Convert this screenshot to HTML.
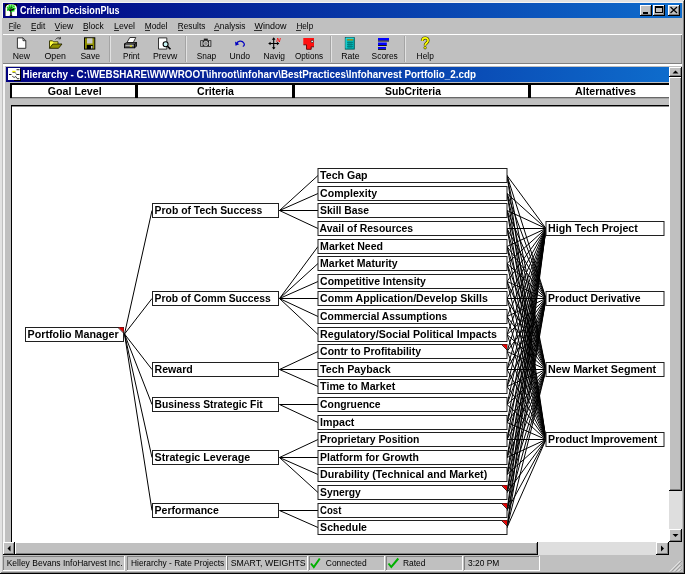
<!DOCTYPE html>
<html><head><meta charset="utf-8"><title>Criterium DecisionPlus</title>
<style>html,body{margin:0;padding:0;background:#c0c0c0;overflow:hidden}svg{display:block;will-change:transform}</style></head>
<body>
<svg width="685" height="574" viewBox="0 0 685 574" font-family="'Liberation Sans', sans-serif" shape-rendering="crispEdges">
<defs><linearGradient id="tg" x1="0" x2="1" y1="0" y2="0"><stop offset="0" stop-color="#000080"/><stop offset="1" stop-color="#0e6ccc"/></linearGradient></defs>
<rect x="0" y="0" width="685" height="574" fill="#c0c0c0"/>
<rect x="0" y="0" width="685" height="2" fill="#e2e2e2"/>
<rect x="0" y="0" width="2" height="574" fill="#e2e2e2"/>
<rect x="2" y="2" width="681" height="1" fill="#f4f4f4"/>
<rect x="2" y="2" width="1" height="16" fill="#f4f4f4"/>
<rect x="3" y="66" width="2" height="488" fill="#f4f4f4"/>
<rect x="684" y="0" width="1" height="574" fill="#000"/>
<rect x="0" y="573" width="685" height="1" fill="#000"/>
<rect x="683" y="1" width="1" height="572" fill="#808080"/>
<rect x="1" y="572" width="683" height="1" fill="#808080"/>
<rect x="3" y="3" width="679" height="15" fill="url(#tg)"/>
<rect x="5" y="4" width="12" height="12" fill="#000"/>
<g shape-rendering="auto"><path d="M5.500 16V8.500Q5.500 4.200 11 4.200Q17 4.200 17 8.500V16z" fill="#fff"/><path d="M11 15.300V10.500M11 11.500L8.300 8.800M11 11.500L13.800 8.300M11 11V6.800M8.800 9.300L7.500 8.800M13.300 8.800l.9 1.200M11 8.500l-1.500-1.500M11 8l1.300-1.500" stroke="#000" stroke-width="1.400" fill="none"/><path d="M9.800 15.400h2.400" stroke="#000" stroke-width="1"/><circle cx="7.8" cy="7.6" r="1.1" fill="#10e010"/><circle cx="9.4" cy="6.1" r="1.1" fill="#10e010"/><circle cx="11.6" cy="5.5" r="1.1" fill="#10e010"/><circle cx="13.8" cy="6.4" r="1.1" fill="#10e010"/><circle cx="14.7" cy="8.6" r="1.0" fill="#10e010"/><circle cx="12.4" cy="8.0" r="0.9" fill="#10e010"/><circle cx="9.6" cy="8.6" r="0.9" fill="#10e010"/><circle cx="7.9" cy="10.0" r="1.0" fill="#10e010"/><circle cx="13.7" cy="10.7" r="0.9" fill="#10e010"/><circle cx="11.6" cy="11.4" r="0.9" fill="#10e010"/><circle cx="10.6" cy="7.3" r="0.8" fill="#10e010"/></g>
<text x="20" y="14" font-size="10.5" font-weight="bold" fill="#fff" textLength="99.5" lengthAdjust="spacingAndGlyphs">Criterium DecisionPlus</text>
<rect x="640" y="5" width="12" height="11" fill="#000"/>
<rect x="640" y="5" width="11" height="10" fill="#fff"/>
<rect x="641" y="6" width="10" height="9" fill="#808080"/>
<rect x="641" y="6" width="9" height="8" fill="#c0c0c0"/>
<rect x="653" y="5" width="12" height="11" fill="#000"/>
<rect x="653" y="5" width="11" height="10" fill="#fff"/>
<rect x="654" y="6" width="10" height="9" fill="#808080"/>
<rect x="654" y="6" width="9" height="8" fill="#c0c0c0"/>
<rect x="668" y="5" width="12" height="11" fill="#000"/>
<rect x="668" y="5" width="11" height="10" fill="#fff"/>
<rect x="669" y="6" width="10" height="9" fill="#808080"/>
<rect x="669" y="6" width="9" height="8" fill="#c0c0c0"/>
<rect x="643" y="12" width="5" height="2" fill="#000"/>
<rect x="655" y="6" width="8" height="7" fill="#000"/>
<rect x="656" y="8" width="6" height="4" fill="#c0c0c0"/>
<path d="M670.500 7l6.500 6M677 7l-6.500 6" stroke="#000" stroke-width="1.200" shape-rendering="auto"/>
<rect x="681" y="35" width="1" height="28" fill="#808080"/>
<text x="8.7" y="28.5" font-size="9.4" textLength="12.3" lengthAdjust="spacingAndGlyphs">File</text>
<rect x="9" y="30" width="5" height="1" fill="#303030"/>
<text x="31" y="28.5" font-size="9.4" textLength="14.2" lengthAdjust="spacingAndGlyphs">Edit</text>
<rect x="31" y="30" width="5" height="1" fill="#303030"/>
<text x="54.6" y="28.5" font-size="9.4" textLength="18.6" lengthAdjust="spacingAndGlyphs">View</text>
<rect x="55" y="30" width="5" height="1" fill="#303030"/>
<text x="83" y="28.5" font-size="9.4" textLength="20.7" lengthAdjust="spacingAndGlyphs">Block</text>
<rect x="83" y="30" width="5" height="1" fill="#303030"/>
<text x="114" y="28.5" font-size="9.4" textLength="21" lengthAdjust="spacingAndGlyphs">Level</text>
<rect x="114" y="30" width="5" height="1" fill="#303030"/>
<text x="144.7" y="28.5" font-size="9.4" textLength="22.8" lengthAdjust="spacingAndGlyphs">Model</text>
<rect x="145" y="30" width="5" height="1" fill="#303030"/>
<text x="177.8" y="28.5" font-size="9.4" textLength="27.5" lengthAdjust="spacingAndGlyphs">Results</text>
<rect x="178" y="30" width="5" height="1" fill="#303030"/>
<text x="214.3" y="28.5" font-size="9.4" textLength="31.1" lengthAdjust="spacingAndGlyphs">Analysis</text>
<rect x="214" y="30" width="5" height="1" fill="#303030"/>
<text x="254.4" y="28.5" font-size="9.4" textLength="32.0" lengthAdjust="spacingAndGlyphs">Window</text>
<rect x="254" y="30" width="8" height="1" fill="#303030"/>
<text x="296.4" y="28.5" font-size="9.4" textLength="16.8" lengthAdjust="spacingAndGlyphs">Help</text>
<rect x="296" y="30" width="5" height="1" fill="#303030"/>
<rect x="3" y="34" width="679" height="1" fill="#fff"/>
<rect x="3" y="63" width="679" height="1" fill="#808080"/>
<rect x="3" y="64" width="679" height="2" fill="#fff"/>
<rect x="109" y="36" width="1" height="26" fill="#a4a4a4"/>
<rect x="110" y="36" width="1" height="26" fill="#e2e2e2"/>
<rect x="185" y="36" width="1" height="26" fill="#a4a4a4"/>
<rect x="186" y="36" width="1" height="26" fill="#e2e2e2"/>
<rect x="330" y="36" width="1" height="26" fill="#a4a4a4"/>
<rect x="331" y="36" width="1" height="26" fill="#e2e2e2"/>
<rect x="404" y="36" width="1" height="26" fill="#a4a4a4"/>
<rect x="405" y="36" width="1" height="26" fill="#e2e2e2"/>
<text x="12.8" y="58.7" font-size="9.2" textLength="17.3" lengthAdjust="spacingAndGlyphs">New</text>
<text x="44.5" y="58.7" font-size="9.2" textLength="21.5" lengthAdjust="spacingAndGlyphs">Open</text>
<text x="80.4" y="58.7" font-size="9.2" textLength="19.6" lengthAdjust="spacingAndGlyphs">Save</text>
<text x="123" y="58.7" font-size="9.2" textLength="16.6" lengthAdjust="spacingAndGlyphs">Print</text>
<text x="153" y="58.7" font-size="9.2" textLength="24.2" lengthAdjust="spacingAndGlyphs">Prevw</text>
<text x="196.8" y="58.7" font-size="9.2" textLength="19.4" lengthAdjust="spacingAndGlyphs">Snap</text>
<text x="229.5" y="58.7" font-size="9.2" textLength="20.5" lengthAdjust="spacingAndGlyphs">Undo</text>
<text x="263.5" y="58.7" font-size="9.2" textLength="21.5" lengthAdjust="spacingAndGlyphs">Navig</text>
<text x="295" y="58.7" font-size="9.2" textLength="28" lengthAdjust="spacingAndGlyphs">Options</text>
<text x="341.2" y="58.7" font-size="9.2" textLength="18.3" lengthAdjust="spacingAndGlyphs">Rate</text>
<text x="371.6" y="58.7" font-size="9.2" textLength="26.2" lengthAdjust="spacingAndGlyphs">Scores</text>
<text x="416.6" y="58.7" font-size="9.2" textLength="17.2" lengthAdjust="spacingAndGlyphs">Help</text>
<g shape-rendering="auto">
<path d="M17.400 37.900h5.600l2.800 2.800v7.600h-8.400z" fill="#fff" stroke="#202020" stroke-width=".9"/><path d="M23 37.900v2.800h2.800" fill="none" stroke="#202020" stroke-width=".9"/>
<path d="M49.500 48.300v-7.500h3l1 1h4.500v2.500" fill="#ffff40" stroke="#303000" stroke-width=".9"/><path d="M49.500 48.300l3.300-4.300h9.200l-3.500 4.300z" fill="#909000" stroke="#202000" stroke-width=".9"/><path d="M55.500 39.500c1.500-2 3.500-2.200 5-.8m0 0l-.2-1.800m.2 1.800l-1.800.3" fill="none" stroke="#303030" stroke-width=".9"/>
<rect x="84.500" y="37.800" width="10.300" height="11.300" fill="#909000" stroke="#000" stroke-width="1"/><rect x="87" y="38.300" width="5.500" height="5.200" fill="#c8c8c8"/><rect x="86.800" y="45" width="6" height="4" fill="#000"/><rect x="91" y="46" width="1.500" height="2.500" fill="#c0c0c0"/>
<path d="M127 42.500l2.800-5h6l-2.500 5z" fill="#fff" stroke="#202020" stroke-width=".9"/><path d="M124.500 44l2-1.500h10l-2 1.500z" fill="#e0e0e0" stroke="#000" stroke-width=".8"/><rect x="124.500" y="44" width="10" height="3.800" fill="#606060" stroke="#000" stroke-width=".9"/><path d="M134.500 44l2-1.500v3.800l-2 1.500z" fill="#404040" stroke="#000" stroke-width=".8"/><rect x="125.500" y="44.800" width="8" height=".9" fill="#d0d0d0"/><rect x="129.800" y="45.500" width="2.200" height="1.200" fill="#e0e000"/>
<path d="M158.500 37.900h8.300v11.200h-8.300z" fill="#fff" stroke="#202020" stroke-width=".9"/><circle cx="165.600" cy="44.200" r="2.500" fill="#c8f4f4" stroke="#000" stroke-width="1.100"/><path d="M167.500 46.200l3 3" stroke="#000" stroke-width="1.600"/>
<rect x="200.300" y="40.300" width="11" height="6.400" fill="#181818"/><rect x="203.800" y="38.600" width="4" height="1.800" fill="#181818"/><circle cx="205.800" cy="43.500" r="2.200" fill="#909090" stroke="#d8d8d8" stroke-width=".8"/><rect x="201.300" y="41" width="1.200" height="5" fill="#f0f0f0"/><rect x="209.200" y="41" width="1.200" height="5" fill="#f0f0f0"/>
<path d="M236.500 44c1-3.300 5.500-3.800 7.300-1 1 1.500 .5 3-1 3.500" fill="none" stroke="#0000c0" stroke-width="1.300"/><path d="M235 41.500l.500 4.300 3.800-1.500z" fill="#0000c0"/>
<path d="M273.700 38v11M269 43.500h9.500" stroke="#000" stroke-width="1.100" fill="none"/><path d="M273.700 37.300l-1.800 2.400h3.600zM273.700 49.600l-1.800-2.400h3.600zM268.200 43.500l2.400-1.800v3.600zM279.300 43.500l-2.400-1.800v3.600z" fill="#000"/>
<text x="276.2" y="41.8" font-size="6" font-weight="bold" fill="#ff0000" font-style="italic">N</text>
<path d="M303.300 38h10.700v8.800h-2.800v2.500h-4.700v-4.500h-3.200z" fill="#ff1010"/><path d="M303.500 44.800h3v4.500h4.700v-2.500h2.800" fill="none" stroke="#600000" stroke-width=".9"/><circle cx="312.200" cy="41.400" r="1.200" fill="#fff" stroke="#202020" stroke-width=".8"/>
<rect x="345.300" y="37.600" width="9" height="11.500" fill="#00b4b4" stroke="#005858" stroke-width=".9"/><path d="M346 48.500v-10.300h7.800" fill="none" stroke="#40f0f0" stroke-width=".8"/><rect x="347" y="39" width="6" height="1.600" fill="#909020"/><path d="M347 42.500h6M347 44.500h6M347 46.500h6M349 41.500v6.500M351 41.500v6.500" stroke="#007878" stroke-width=".8"/>
<rect x="378" y="38" width="11" height="2.600" fill="#0000ff"/><rect x="378" y="40.600" width="11" height=".9" fill="#000"/>
<rect x="378" y="42.500" width="8.800" height="2.500" fill="#0000ff"/><rect x="378" y="45" width="8.800" height=".9" fill="#000"/>
<rect x="378" y="47" width="8" height="1.900" fill="#0000ff"/><rect x="378" y="48.900" width="8" height=".9" fill="#000"/>
<path d="M422.300 41c0-4 5.800-4 5.800-.5 0 2.500-3 2.500-3 5" fill="none" stroke="#404000" stroke-width="3"/><path d="M422.300 41c0-4 5.800-4 5.800-.5 0 2.500-3 2.500-3 5" fill="none" stroke="#ffff00" stroke-width="1.700"/><circle cx="425.100" cy="47.700" r="1.300" fill="#ffff00" stroke="#404000" stroke-width=".7"/>
</g>
<rect x="6" y="67" width="663" height="15" fill="url(#tg)"/>
<rect x="8" y="68" width="12" height="12" fill="#fff"/>
<rect x="20" y="69" width="1" height="12" fill="#000"/>
<rect x="14" y="80" width="7" height="1" fill="#000"/>
<g shape-rendering="auto"><rect x="9" y="74" width="2.500" height="1" fill="#202020"/><rect x="12.300" y="70.800" width="3.200" height="1.400" fill="#f0f000"/><rect x="12.500" y="72.200" width="3" height=".7" fill="#404040"/><rect x="16.500" y="69.200" width="3" height="1" fill="#303030"/><rect x="16.500" y="74" width="3" height="1" fill="#303030"/><rect x="16.800" y="78.200" width="2.500" height="1" fill="#303030"/><path d="M12.200 76.200l2 1.300 2-1.300M15.500 73.300l1.200 1M16 77l1 1.200" stroke="#303030" stroke-width=".9" fill="none"/></g>
<text x="22.5" y="78" font-size="10.5" font-weight="bold" fill="#fff" textLength="453.5" lengthAdjust="spacingAndGlyphs">Hierarchy - C:\WEBSHARE\WWWROOT\ihroot\infoharv\BestPractices\Infoharvest Portfolio_2.cdp</text>
<rect x="10" y="83" width="659" height="16" fill="#fff"/>
<rect x="10" y="83" width="659" height="2" fill="#000"/>
<rect x="10" y="97" width="659" height="1" fill="#686868"/>
<rect x="10" y="98" width="659" height="1" fill="#a4a4a4"/>
<rect x="10" y="83" width="2" height="15" fill="#000"/>
<rect x="135" y="83" width="3" height="15" fill="#000"/>
<rect x="292" y="83" width="3" height="15" fill="#000"/>
<rect x="528" y="83" width="3" height="15" fill="#000"/>
<text x="47.8" y="95.2" font-size="11" font-weight="bold" textLength="53.8" lengthAdjust="spacingAndGlyphs">Goal Level</text>
<text x="197" y="95.2" font-size="11" font-weight="bold" textLength="37" lengthAdjust="spacingAndGlyphs">Criteria</text>
<text x="385" y="95.2" font-size="11" font-weight="bold" textLength="56" lengthAdjust="spacingAndGlyphs">SubCriteria</text>
<text x="575" y="95.2" font-size="11" font-weight="bold" textLength="61" lengthAdjust="spacingAndGlyphs">Alternatives</text>
<rect x="11" y="105" width="658" height="437" fill="#000"/>
<rect x="12" y="106" width="657" height="436" fill="#fff"/>
<rect x="12" y="106" width="657" height="1" fill="#8c8c8c"/>
<g shape-rendering="auto" stroke="#000" stroke-width="1" fill="none">
<path d="M124.5 334.0L152 210.5"/>
<path d="M279.5 210.5L318 175.5"/>
<path d="M279.5 210.5L318 193.5"/>
<path d="M279.5 210.5L318 210.5"/>
<path d="M279.5 210.5L318 228.5"/>
<path d="M124.5 334.0L152 298.5"/>
<path d="M279.5 298.5L318 246.5"/>
<path d="M279.5 298.5L318 263.5"/>
<path d="M279.5 298.5L318 281.5"/>
<path d="M279.5 298.5L318 298.5"/>
<path d="M279.5 298.5L318 316.5"/>
<path d="M279.5 298.5L318 334.5"/>
<path d="M124.5 334.0L152 369.5"/>
<path d="M279.5 369.5L318 351.5"/>
<path d="M279.5 369.5L318 369.5"/>
<path d="M279.5 369.5L318 386.5"/>
<path d="M124.5 334.0L152 404.5"/>
<path d="M279.5 404.5L318 404.5"/>
<path d="M279.5 404.5L318 422.5"/>
<path d="M124.5 334.0L152 457.5"/>
<path d="M279.5 457.5L318 439.5"/>
<path d="M279.5 457.5L318 457.5"/>
<path d="M279.5 457.5L318 474.5"/>
<path d="M279.5 457.5L318 492.5"/>
<path d="M124.5 334.0L152 510.5"/>
<path d="M279.5 510.5L318 510.5"/>
<path d="M279.5 510.5L318 527.5"/>
<path d="M507 175.5L546 228.5"/>
<path d="M507 175.5L546 298.5"/>
<path d="M507 175.5L546 369.5"/>
<path d="M507 175.5L546 439.5"/>
<path d="M507 193.5L546 228.5"/>
<path d="M507 193.5L546 298.5"/>
<path d="M507 193.5L546 369.5"/>
<path d="M507 193.5L546 439.5"/>
<path d="M507 210.5L546 228.5"/>
<path d="M507 210.5L546 298.5"/>
<path d="M507 210.5L546 369.5"/>
<path d="M507 210.5L546 439.5"/>
<path d="M507 228.5L546 228.5"/>
<path d="M507 228.5L546 298.5"/>
<path d="M507 228.5L546 369.5"/>
<path d="M507 228.5L546 439.5"/>
<path d="M507 246.5L546 228.5"/>
<path d="M507 246.5L546 298.5"/>
<path d="M507 246.5L546 369.5"/>
<path d="M507 246.5L546 439.5"/>
<path d="M507 263.5L546 228.5"/>
<path d="M507 263.5L546 298.5"/>
<path d="M507 263.5L546 369.5"/>
<path d="M507 263.5L546 439.5"/>
<path d="M507 281.5L546 228.5"/>
<path d="M507 281.5L546 298.5"/>
<path d="M507 281.5L546 369.5"/>
<path d="M507 281.5L546 439.5"/>
<path d="M507 298.5L546 228.5"/>
<path d="M507 298.5L546 298.5"/>
<path d="M507 298.5L546 369.5"/>
<path d="M507 298.5L546 439.5"/>
<path d="M507 316.5L546 228.5"/>
<path d="M507 316.5L546 298.5"/>
<path d="M507 316.5L546 369.5"/>
<path d="M507 316.5L546 439.5"/>
<path d="M507 334.5L546 228.5"/>
<path d="M507 334.5L546 298.5"/>
<path d="M507 334.5L546 369.5"/>
<path d="M507 334.5L546 439.5"/>
<path d="M507 351.5L546 228.5"/>
<path d="M507 351.5L546 298.5"/>
<path d="M507 351.5L546 369.5"/>
<path d="M507 351.5L546 439.5"/>
<path d="M507 369.5L546 228.5"/>
<path d="M507 369.5L546 298.5"/>
<path d="M507 369.5L546 369.5"/>
<path d="M507 369.5L546 439.5"/>
<path d="M507 386.5L546 228.5"/>
<path d="M507 386.5L546 298.5"/>
<path d="M507 386.5L546 369.5"/>
<path d="M507 386.5L546 439.5"/>
<path d="M507 404.5L546 228.5"/>
<path d="M507 404.5L546 298.5"/>
<path d="M507 404.5L546 369.5"/>
<path d="M507 404.5L546 439.5"/>
<path d="M507 422.5L546 228.5"/>
<path d="M507 422.5L546 298.5"/>
<path d="M507 422.5L546 369.5"/>
<path d="M507 422.5L546 439.5"/>
<path d="M507 439.5L546 228.5"/>
<path d="M507 439.5L546 298.5"/>
<path d="M507 439.5L546 369.5"/>
<path d="M507 439.5L546 439.5"/>
<path d="M507 457.5L546 228.5"/>
<path d="M507 457.5L546 298.5"/>
<path d="M507 457.5L546 369.5"/>
<path d="M507 457.5L546 439.5"/>
<path d="M507 474.5L546 228.5"/>
<path d="M507 474.5L546 298.5"/>
<path d="M507 474.5L546 369.5"/>
<path d="M507 474.5L546 439.5"/>
<path d="M507 492.5L546 228.5"/>
<path d="M507 492.5L546 298.5"/>
<path d="M507 492.5L546 369.5"/>
<path d="M507 492.5L546 439.5"/>
<path d="M507 510.5L546 228.5"/>
<path d="M507 510.5L546 298.5"/>
<path d="M507 510.5L546 369.5"/>
<path d="M507 510.5L546 439.5"/>
<path d="M507 527.5L546 228.5"/>
<path d="M507 527.5L546 298.5"/>
<path d="M507 527.5L546 369.5"/>
<path d="M507 527.5L546 439.5"/>
</g>
<rect x="25.5" y="327.5" width="98" height="14" fill="#fff" stroke="#202020" stroke-width="1" shape-rendering="auto"/>
<path d="M118.5 327.5h5v5z" fill="#e80000" shape-rendering="auto"/><path d="M118 327.5l5.500 5.500" stroke="#301010" stroke-width=".9" shape-rendering="auto"/>
<text x="27.6" y="338.4" font-size="11.2" font-weight="bold" textLength="91.1" lengthAdjust="spacingAndGlyphs">Portfolio Manager</text>
<rect x="152.5" y="203.5" width="126" height="14" fill="#fff" stroke="#202020" stroke-width="1" shape-rendering="auto"/>
<text x="154.6" y="214.4" font-size="11.2" font-weight="bold" textLength="107.7" lengthAdjust="spacingAndGlyphs">Prob of Tech Success</text>
<rect x="152.5" y="291.5" width="126" height="14" fill="#fff" stroke="#202020" stroke-width="1" shape-rendering="auto"/>
<text x="154.6" y="302.4" font-size="11.2" font-weight="bold" textLength="116.1" lengthAdjust="spacingAndGlyphs">Prob of Comm Success</text>
<rect x="152.5" y="362.5" width="126" height="14" fill="#fff" stroke="#202020" stroke-width="1" shape-rendering="auto"/>
<text x="154.6" y="373.4" font-size="11.2" font-weight="bold" textLength="38.2" lengthAdjust="spacingAndGlyphs">Reward</text>
<rect x="152.5" y="397.5" width="126" height="14" fill="#fff" stroke="#202020" stroke-width="1" shape-rendering="auto"/>
<text x="154.6" y="408.4" font-size="11.2" font-weight="bold" textLength="108.1" lengthAdjust="spacingAndGlyphs">Business Strategic Fit</text>
<rect x="152.5" y="450.5" width="126" height="14" fill="#fff" stroke="#202020" stroke-width="1" shape-rendering="auto"/>
<text x="154.6" y="461.4" font-size="11.2" font-weight="bold" textLength="95.6" lengthAdjust="spacingAndGlyphs">Strategic Leverage</text>
<rect x="152.5" y="503.5" width="126" height="14" fill="#fff" stroke="#202020" stroke-width="1" shape-rendering="auto"/>
<text x="154.6" y="514.4" font-size="11.2" font-weight="bold" textLength="64.2" lengthAdjust="spacingAndGlyphs">Performance</text>
<rect x="318.0" y="168.5" width="189.0" height="14" fill="#fff" stroke="#202020" stroke-width="1" shape-rendering="auto"/>
<text x="320.1" y="179.4" font-size="11.2" font-weight="bold" textLength="47.5" lengthAdjust="spacingAndGlyphs">Tech Gap</text>
<rect x="318.0" y="186.5" width="189.0" height="14" fill="#fff" stroke="#202020" stroke-width="1" shape-rendering="auto"/>
<text x="320.1" y="197.4" font-size="11.2" font-weight="bold" textLength="57" lengthAdjust="spacingAndGlyphs">Complexity</text>
<rect x="318.0" y="203.5" width="189.0" height="14" fill="#fff" stroke="#202020" stroke-width="1" shape-rendering="auto"/>
<text x="320.1" y="214.4" font-size="11.2" font-weight="bold" textLength="49" lengthAdjust="spacingAndGlyphs">Skill Base</text>
<rect x="318.0" y="221.5" width="189.0" height="14" fill="#fff" stroke="#202020" stroke-width="1" shape-rendering="auto"/>
<text x="319.6" y="232.4" font-size="11.2" font-weight="bold" textLength="93.5" lengthAdjust="spacingAndGlyphs">Avail of Resources</text>
<rect x="318.0" y="239.5" width="189.0" height="14" fill="#fff" stroke="#202020" stroke-width="1" shape-rendering="auto"/>
<text x="320.1" y="250.4" font-size="11.2" font-weight="bold" textLength="63" lengthAdjust="spacingAndGlyphs">Market Need</text>
<rect x="318.0" y="256.5" width="189.0" height="14" fill="#fff" stroke="#202020" stroke-width="1" shape-rendering="auto"/>
<text x="320.1" y="267.4" font-size="11.2" font-weight="bold" textLength="77.6" lengthAdjust="spacingAndGlyphs">Market Maturity</text>
<rect x="318.0" y="274.5" width="189.0" height="14" fill="#fff" stroke="#202020" stroke-width="1" shape-rendering="auto"/>
<text x="320.1" y="285.4" font-size="11.2" font-weight="bold" textLength="105.8" lengthAdjust="spacingAndGlyphs">Competitive Intensity</text>
<rect x="318.0" y="291.5" width="189.0" height="14" fill="#fff" stroke="#202020" stroke-width="1" shape-rendering="auto"/>
<text x="320.1" y="302.4" font-size="11.2" font-weight="bold" textLength="167.7" lengthAdjust="spacingAndGlyphs">Comm Application/Develop Skills</text>
<rect x="318.0" y="309.5" width="189.0" height="14" fill="#fff" stroke="#202020" stroke-width="1" shape-rendering="auto"/>
<text x="320.1" y="320.4" font-size="11.2" font-weight="bold" textLength="127.2" lengthAdjust="spacingAndGlyphs">Commercial Assumptions</text>
<rect x="318.0" y="327.5" width="189.0" height="14" fill="#fff" stroke="#202020" stroke-width="1" shape-rendering="auto"/>
<text x="320.1" y="338.4" font-size="11.2" font-weight="bold" textLength="176.9" lengthAdjust="spacingAndGlyphs">Regulatory/Social Political Impacts</text>
<rect x="318.0" y="344.5" width="189.0" height="14" fill="#fff" stroke="#202020" stroke-width="1" shape-rendering="auto"/>
<path d="M502.0 344.5h5v5z" fill="#e80000" shape-rendering="auto"/><path d="M501.5 344.5l5.500 5.500" stroke="#301010" stroke-width=".9" shape-rendering="auto"/>
<text x="320.1" y="355.4" font-size="11.2" font-weight="bold" textLength="100.9" lengthAdjust="spacingAndGlyphs">Contr to Profitability</text>
<rect x="318.0" y="362.5" width="189.0" height="14" fill="#fff" stroke="#202020" stroke-width="1" shape-rendering="auto"/>
<text x="320.1" y="373.4" font-size="11.2" font-weight="bold" textLength="70.5" lengthAdjust="spacingAndGlyphs">Tech Payback</text>
<rect x="318.0" y="379.5" width="189.0" height="14" fill="#fff" stroke="#202020" stroke-width="1" shape-rendering="auto"/>
<text x="320.1" y="390.4" font-size="11.2" font-weight="bold" textLength="75.1" lengthAdjust="spacingAndGlyphs">Time to Market</text>
<rect x="318.0" y="397.5" width="189.0" height="14" fill="#fff" stroke="#202020" stroke-width="1" shape-rendering="auto"/>
<text x="320.1" y="408.4" font-size="11.2" font-weight="bold" textLength="60.4" lengthAdjust="spacingAndGlyphs">Congruence</text>
<rect x="318.0" y="415.5" width="189.0" height="14" fill="#fff" stroke="#202020" stroke-width="1" shape-rendering="auto"/>
<text x="320.1" y="426.4" font-size="11.2" font-weight="bold" textLength="34.3" lengthAdjust="spacingAndGlyphs">Impact</text>
<rect x="318.0" y="432.5" width="189.0" height="14" fill="#fff" stroke="#202020" stroke-width="1" shape-rendering="auto"/>
<text x="320.1" y="443.4" font-size="11.2" font-weight="bold" textLength="99.3" lengthAdjust="spacingAndGlyphs">Proprietary Position</text>
<rect x="318.0" y="450.5" width="189.0" height="14" fill="#fff" stroke="#202020" stroke-width="1" shape-rendering="auto"/>
<text x="320.1" y="461.4" font-size="11.2" font-weight="bold" textLength="98.7" lengthAdjust="spacingAndGlyphs">Platform for Growth</text>
<rect x="318.0" y="467.5" width="189.0" height="14" fill="#fff" stroke="#202020" stroke-width="1" shape-rendering="auto"/>
<text x="320.1" y="478.4" font-size="11.2" font-weight="bold" textLength="167.1" lengthAdjust="spacingAndGlyphs">Durability (Technical and Market)</text>
<rect x="318.0" y="485.5" width="189.0" height="14" fill="#fff" stroke="#202020" stroke-width="1" shape-rendering="auto"/>
<path d="M502.0 485.5h5v5z" fill="#e80000" shape-rendering="auto"/><path d="M501.5 485.5l5.500 5.500" stroke="#301010" stroke-width=".9" shape-rendering="auto"/>
<text x="320.1" y="496.4" font-size="11.2" font-weight="bold" textLength="40.7" lengthAdjust="spacingAndGlyphs">Synergy</text>
<rect x="318.0" y="503.5" width="189.0" height="14" fill="#fff" stroke="#202020" stroke-width="1" shape-rendering="auto"/>
<path d="M502.0 503.5h5v5z" fill="#e80000" shape-rendering="auto"/><path d="M501.5 503.5l5.500 5.500" stroke="#301010" stroke-width=".9" shape-rendering="auto"/>
<text x="320.1" y="514.4" font-size="11.2" font-weight="bold" textLength="21.3" lengthAdjust="spacingAndGlyphs">Cost</text>
<rect x="318.0" y="520.5" width="189.0" height="14" fill="#fff" stroke="#202020" stroke-width="1" shape-rendering="auto"/>
<path d="M502.0 520.5h5v5z" fill="#e80000" shape-rendering="auto"/><path d="M501.5 520.5l5.500 5.500" stroke="#301010" stroke-width=".9" shape-rendering="auto"/>
<text x="320.1" y="531.4" font-size="11.2" font-weight="bold" textLength="46.9" lengthAdjust="spacingAndGlyphs">Schedule</text>
<rect x="546.0" y="221.5" width="118.0" height="14" fill="#fff" stroke="#202020" stroke-width="1" shape-rendering="auto"/>
<text x="548.1" y="232.4" font-size="11.2" font-weight="bold" textLength="89.7" lengthAdjust="spacingAndGlyphs">High Tech Project</text>
<rect x="546.0" y="291.5" width="118.0" height="14" fill="#fff" stroke="#202020" stroke-width="1" shape-rendering="auto"/>
<text x="548.1" y="302.4" font-size="11.2" font-weight="bold" textLength="92.4" lengthAdjust="spacingAndGlyphs">Product Derivative</text>
<rect x="546.0" y="362.5" width="118.0" height="14" fill="#fff" stroke="#202020" stroke-width="1" shape-rendering="auto"/>
<text x="548.1" y="373.4" font-size="11.2" font-weight="bold" textLength="108" lengthAdjust="spacingAndGlyphs">New Market Segment</text>
<rect x="546.0" y="432.5" width="118.0" height="14" fill="#fff" stroke="#202020" stroke-width="1" shape-rendering="auto"/>
<text x="548.1" y="443.4" font-size="11.2" font-weight="bold" textLength="109.1" lengthAdjust="spacingAndGlyphs">Product Improvement</text>
<rect x="669" y="67" width="13" height="475" fill="#dedede"/>
<rect x="669" y="67" width="13" height="10" fill="#000"/>
<rect x="669" y="67" width="12" height="9" fill="#fff"/>
<rect x="670" y="68" width="11" height="8" fill="#808080"/>
<rect x="670" y="68" width="10" height="7" fill="#c0c0c0"/>
<path d="M672.5 73.500h6l-3-3z" fill="#000" shape-rendering="auto"/>
<rect x="669" y="529" width="13" height="13" fill="#000"/>
<rect x="669" y="529" width="12" height="12" fill="#fff"/>
<rect x="670" y="530" width="11" height="11" fill="#808080"/>
<rect x="670" y="530" width="10" height="10" fill="#c0c0c0"/>
<path d="M672.5 534h6l-3 3z" fill="#000" shape-rendering="auto"/>
<rect x="669" y="77" width="13" height="414" fill="#000"/>
<rect x="669" y="77" width="12" height="413" fill="#fff"/>
<rect x="670" y="78" width="11" height="412" fill="#808080"/>
<rect x="670" y="78" width="10" height="411" fill="#c0c0c0"/>
<rect x="3" y="542" width="666" height="13" fill="#dedede"/>
<rect x="3" y="542" width="12" height="13" fill="#000"/>
<rect x="3" y="542" width="11" height="12" fill="#fff"/>
<rect x="4" y="543" width="10" height="11" fill="#808080"/>
<rect x="4" y="543" width="9" height="10" fill="#c0c0c0"/>
<path d="M10.500 545.500v6l-3-3z" fill="#000" shape-rendering="auto"/>
<rect x="656" y="542" width="13" height="13" fill="#000"/>
<rect x="656" y="542" width="12" height="12" fill="#fff"/>
<rect x="657" y="543" width="11" height="11" fill="#808080"/>
<rect x="657" y="543" width="10" height="10" fill="#c0c0c0"/>
<path d="M661 545.500v6l3-3z" fill="#000" shape-rendering="auto"/>
<rect x="15" y="542" width="523" height="13" fill="#000"/>
<rect x="15" y="542" width="522" height="12" fill="#fff"/>
<rect x="16" y="543" width="521" height="11" fill="#808080"/>
<rect x="16" y="543" width="520" height="10" fill="#c0c0c0"/>
<rect x="3" y="556" width="122" height="15" fill="#fff"/>
<rect x="3" y="556" width="121" height="14" fill="#808080"/>
<rect x="4" y="557" width="120" height="13" fill="#c0c0c0"/>
<rect x="127" y="556" width="100" height="15" fill="#fff"/>
<rect x="127" y="556" width="99" height="14" fill="#808080"/>
<rect x="128" y="557" width="98" height="13" fill="#c0c0c0"/>
<rect x="227" y="556" width="81" height="15" fill="#fff"/>
<rect x="227" y="556" width="80" height="14" fill="#808080"/>
<rect x="228" y="557" width="79" height="13" fill="#c0c0c0"/>
<rect x="309" y="556" width="76" height="15" fill="#fff"/>
<rect x="309" y="556" width="75" height="14" fill="#808080"/>
<rect x="310" y="557" width="74" height="13" fill="#c0c0c0"/>
<rect x="386" y="556" width="77" height="15" fill="#fff"/>
<rect x="386" y="556" width="76" height="14" fill="#808080"/>
<rect x="387" y="557" width="75" height="13" fill="#c0c0c0"/>
<rect x="464" y="556" width="76" height="15" fill="#fff"/>
<rect x="464" y="556" width="75" height="14" fill="#808080"/>
<rect x="465" y="557" width="74" height="13" fill="#c0c0c0"/>
<text x="6.7" y="566.4" font-size="9.3" textLength="115.9" lengthAdjust="spacingAndGlyphs">Kelley Bevans InfoHarvest Inc.</text>
<text x="131" y="566.4" font-size="9.3" textLength="93.3" lengthAdjust="spacingAndGlyphs">Hierarchy - Rate Projects</text>
<text x="230.7" y="566.4" font-size="9.3" textLength="74.9" lengthAdjust="spacingAndGlyphs">SMART, WEIGHTS</text>
<text x="325.8" y="566.4" font-size="9.3" textLength="40.9" lengthAdjust="spacingAndGlyphs">Connected</text>
<text x="403" y="566.4" font-size="9.3" textLength="22.5" lengthAdjust="spacingAndGlyphs">Rated</text>
<text x="468" y="566.4" font-size="9.3" textLength="31.2" lengthAdjust="spacingAndGlyphs">3:20 PM</text>
<g shape-rendering="auto" fill="none" stroke="#00b000" stroke-width="2"><path d="M311 563.500l2.800 3.500 6-8.500"/><path d="M388.500 563.500l2.800 3.500 7-8.500"/></g>
<g shape-rendering="auto" stroke-width="1"><path d="M671 571.500l10.500-10.500M675 571.500l6.500-6.500M679 571.500l2.500-2.500" stroke="#808080"/><path d="M670 571.500l10.500-10.500M674 571.500l6.500-6.500M678 571.500l2.500-2.500" stroke="#fff"/></g>
</svg>
</body></html>
